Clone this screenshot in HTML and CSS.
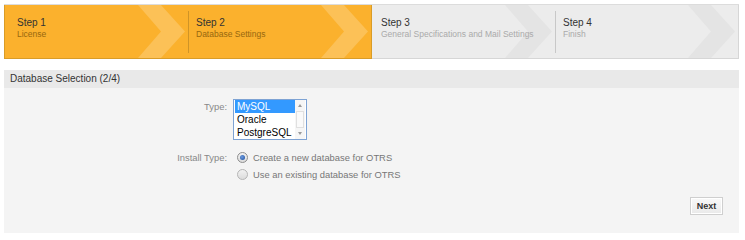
FILE: index.html
```html
<!DOCTYPE html>
<html>
<head>
<meta charset="utf-8">
<title>Database Selection</title>
<link rel="stylesheet" href="styles.css">
</head>
<body>
<div class="page">
  <div class="steps">
    <div class="step active first">
      <svg class="chev" viewBox="0 0 48 54" preserveAspectRatio="none"><polygon points="0,0 23,0 47,27 23,54 0,54 23,27"/></svg>
      <div class="step-body"><div class="step-title">Step 1</div><div class="step-sub">License</div></div>
    </div>
    <div class="step active last-active">
      <svg class="chev" viewBox="0 0 48 54" preserveAspectRatio="none"><polygon points="0,0 23,0 47,27 23,54 0,54 23,27"/></svg>
      <div class="step-body divided"><div class="step-title">Step 2</div><div class="step-sub">Database Settings</div></div>
    </div>
    <div class="step">
      <svg class="chev" viewBox="0 0 48 54" preserveAspectRatio="none"><polygon points="0,0 23,0 47,27 23,54 0,54 23,27"/></svg>
      <div class="step-body plain"><div class="step-title">Step 3</div><div class="step-sub">General Specifications and Mail Settings</div></div>
    </div>
    <div class="step last">
      <svg class="chev" viewBox="0 0 48 54" preserveAspectRatio="none"><polygon points="0,0 23,0 47,27 23,54 0,54 23,27"/></svg>
      <div class="step-body divided"><div class="step-title">Step 4</div><div class="step-sub">Finish</div></div>
    </div>
  </div>

  <div class="section-head">Database Selection (2/4)</div>
  <div class="section-body">
    <div class="form">
      <div class="label label-top">Type:</div>
      <div class="listbox">
        <div class="options">
          <div class="option selected">MySQL</div>
          <div class="option">Oracle</div>
          <div class="option">PostgreSQL</div>
        </div>
        <div class="scrollbar">
          <div class="sb-btn"><span class="tri-up"></span></div>
          <div class="sb-thumb"></div>
          <div class="sb-btn"><span class="tri-down"></span></div>
        </div>
      </div>
      <div class="label">Install Type:</div>
      <div class="radios">
        <div class="radio-row"><span class="radio checked"></span><span class="radio-text">Create a new database for OTRS</span></div>
        <div class="radio-row"><span class="radio"></span><span class="radio-text">Use an existing database for OTRS</span></div>
      </div>
    </div>
    <div class="actions"><button class="btn" type="button">Next</button></div>
  </div>
</div>
</body>
</html>
```
FILE: styles.css
```css
html, body {
  margin: 0;
  padding: 0;
  background: #ffffff;
  font-family: "Liberation Sans", Arial, sans-serif;
}

.page {
  width: 735px;
  margin: 4px 0 0 4px;
}

/* Steps bar */
.steps {
  display: flex;
  height: 55px;
  border-top: 1px solid #dcdcdc;
  box-sizing: border-box;
}

.step {
  position: relative;
  flex: 1 1 0;
  min-width: 0;
  background: #ececec;
  border-bottom: 1px solid #d6d6d6;
  overflow: hidden;
}

.step.active {
  background: #fbb12d;
  border-bottom-color: #d99c27;
}

.step.first {
  border-left: 1px solid #d99c27;
}

.step.last-active {
  border-right: 1px solid #d99c27;
}

.step.last {
  border-right: 1px solid #d6d6d6;
}

.chev {
  position: absolute;
  top: 0;
  right: 2px;
  width: 48px;
  height: 100%;
  fill: #e4e4e4;
}

.step.active .chev {
  fill: #fcc157;
}

.step-body {
  position: relative;
  margin-top: 6px;
  height: 42px;
  box-sizing: border-box;
  padding: 5px 0 0 12px;
  white-space: nowrap;
}

.step-body.divided {
  padding-left: 7px;
  border-left: 1px solid #c8c8c8;
  box-shadow: 1px 0 0 #f7f7f7;
}

.step.active .step-body.divided {
  border-left-color: #cf9427;
  box-shadow: none;
}

.step-body.plain {
  padding-left: 9px;
}

.step-title {
  font-size: 10px;
  line-height: 13px;
  color: #333333;
}

.step-sub {
  font-size: 8.5px;
  line-height: 11px;
  color: #aaaaaa;
}

.step.active .step-sub {
  color: #97680f;
}

/* Section */
.section-head {
  margin-top: 11px;
  height: 18px;
  line-height: 18px;
  padding-left: 6px;
  background: #e9e9e9;
  font-size: 10px;
  color: #333333;
}

.section-body {
  background: #f4f4f4;
  padding: 11px 16px 18px 0;
}

.form {
  display: grid;
  grid-template-columns: 223px auto;
  column-gap: 6px;
  row-gap: 9px;
  align-items: start;
}

.label {
  text-align: right;
  font-size: 9.4px;
  line-height: 17px;
  color: #888888;
}

.label-top {
  line-height: 13px;
  padding-top: 1px;
}

/* Listbox */
.listbox {
  display: flex;
  width: 74px;
  height: 41px;
  box-sizing: border-box;
  border: 1px solid #7ea3d4;
  background: #ffffff;
  padding: 0 1px 0 1px;
}

.options {
  flex: 1;
}

.option {
  height: 13px;
  line-height: 13px;
  font-size: 10px;
  color: #000000;
  padding-left: 2px;
  white-space: nowrap;
}

.option.selected {
  background: #3399ff;
  color: #ffffff;
}

.scrollbar {
  width: 10px;
  display: flex;
  flex-direction: column;
  background: #f6f6f6;
}

.sb-btn {
  height: 11px;
  display: flex;
  align-items: center;
  justify-content: center;
}

.sb-thumb {
  flex: 1;
  margin: 0 1px;
  border: 1px solid #e0e0e0;
  background: #fafafa;
}

.tri-up, .tri-down {
  width: 0;
  height: 0;
  border-left: 2.5px solid transparent;
  border-right: 2.5px solid transparent;
}

.tri-up {
  border-bottom: 3px solid #9a9a9a;
}

.tri-down {
  border-top: 3px solid #9a9a9a;
}

/* Radios */
.radio-row {
  display: flex;
  align-items: center;
  height: 17px;
}

.radio {
  position: relative;
  width: 11px;
  height: 11px;
  box-sizing: border-box;
  margin-left: 4px;
  border-radius: 50%;
  border: 1px solid #b5b5b5;
  background: linear-gradient(#f2f2f2, #dcdcdc);
}

.radio.checked {
  border-color: #8e8e8e;
}

.radio.checked::after {
  content: "";
  position: absolute;
  left: 2px;
  top: 2px;
  width: 5px;
  height: 5px;
  border-radius: 50%;
  background: radial-gradient(circle at 40% 40%, #6c9be0, #1d4e9c);
}

.radio-text {
  margin-left: 5px;
  font-size: 9.4px;
  color: #777777;
  white-space: nowrap;
}

/* Actions */
.actions {
  display: flex;
  justify-content: flex-end;
  margin-top: 14px;
}

.btn {
  height: 18px;
  width: 33px;
  padding: 0;
  border: 1px solid #cfcfcf;
  box-shadow: inset 0 0 0 1px #ffffff;
  background: linear-gradient(#f9f9f9, #e9e9e9);
  font-family: "Liberation Sans", Arial, sans-serif;
  font-size: 9px;
  font-weight: bold;
  color: #333333;
  cursor: pointer;
}
```
